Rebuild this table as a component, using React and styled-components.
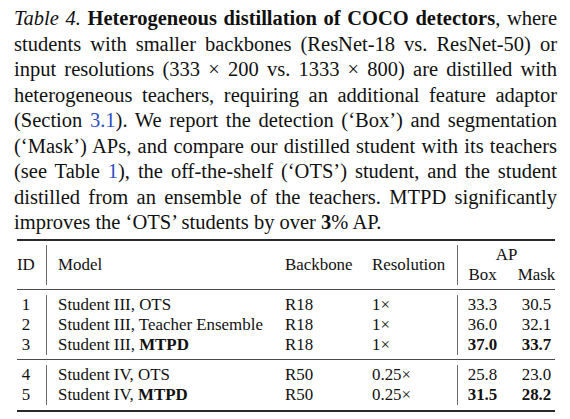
import styled, { createGlobalStyle } from "styled-components";

const GlobalStyle = createGlobalStyle`
  body {
    margin: 0;
    background: #fff;
  }
`;

const COLS = "29px 228px 87px 96px 50px 48px";

const rows = [
  [
    { id: 1, model: "Student III, ", tag: "OTS", backbone: "R18", res: "1×", box: "33.3", mask: "30.5" },
    { id: 2, model: "Student III, ", tag: "Teacher Ensemble", backbone: "R18", res: "1×", box: "36.0", mask: "32.1" },
    { id: 3, model: "Student III, ", tag: "MTPD", ours: true, backbone: "R18", res: "1×", box: "37.0", mask: "33.7" },
  ],
  [
    { id: 4, model: "Student IV, ", tag: "OTS", backbone: "R50", res: "0.25×", box: "25.8", mask: "23.0" },
    { id: 5, model: "Student IV, ", tag: "MTPD", ours: true, backbone: "R50", res: "0.25×", box: "31.5", mask: "28.2" },
  ],
];

function App() {
  return (
    <Page>
      <GlobalStyle />
      <Caption>
        <Line>
          <i>Table 4.</i> <b>Heterogeneous distillation of COCO detectors</b>, where
        </Line>
        <Line>students with smaller backbones (ResNet-18 vs. ResNet-50) or</Line>
        <Line>input resolutions (333 × 200 vs. 1333 × 800) are distilled with</Line>
        <Line>heterogeneous teachers, requiring an additional feature adaptor</Line>
        <Line>
          (Section <Ref>3.1</Ref>). We report the detection (‘Box’) and segmentation
        </Line>
        <Line>(‘Mask’) APs, and compare our distilled student with its teachers</Line>
        <Line>
          (see Table <Ref>1</Ref>), the off-the-shelf (‘OTS’) student, and the student
        </Line>
        <Line>distilled from an ensemble of the teachers. MTPD significantly</Line>
        <Line $last>
          improves the ‘OTS’ students by over <b>3</b>% AP.
        </Line>
      </Caption>

      <Table>
        <Rule $thick />
        <Section $top={4} $bottom={4}>
          <Cell $first $span={2}>ID</Cell>
          <Cell $vline $span={2}>Model</Cell>
          <Cell $span={2}>Backbone</Cell>
          <Cell $span={2}>Resolution</Cell>
          <Cell $vline $center $cols={2}>AP</Cell>
          <Cell $vline $center>Box</Cell>
          <Cell $center $last>Mask</Cell>
        </Section>
        {rows.map((group, gi) => (
          <div key={gi}>
            <Rule />
            <Section $top={5} $bottom={gi === rows.length - 1 ? 5 : 4}>
              {group.map((r) => (
                <Row key={r.id}>
                  <Cell $first $center>{r.id}</Cell>
                  <Cell $vline>
                    <span>
                      {r.model}
                      {r.ours ? <b>{r.tag}</b> : r.tag}
                    </span>
                  </Cell>
                  <Cell>{r.backbone}</Cell>
                  <Cell>{r.res}</Cell>
                  <Cell $vline $center $bold={r.ours}>{r.box}</Cell>
                  <Cell $center $last $bold={r.ours}>{r.mask}</Cell>
                </Row>
              ))}
            </Section>
          </div>
        ))}
        <Rule $thick />
      </Table>
    </Page>
  );
}

export default App;

const Page = styled.div`
  width: 543px;
  padding: 6px 0 0 14px;
  font-family: "Liberation Serif", "Times New Roman", serif;
  color: #111;
`;

const Caption = styled.div`
  font-size: 20.5px;
  line-height: 25.5px;
`;

const Line = styled.div`
  white-space: nowrap;
  text-align: ${(p) => (p.$last ? "left" : "justify")};
  text-align-last: ${(p) => (p.$last ? "left" : "justify")};
`;

const Ref = styled.span`
  color: #2f4fc4;
`;

const Table = styled.div`
  width: 538px;
  margin: 3px 0 0 3px;
  font-size: 16.9px;
  line-height: 20px;
`;

const Rule = styled.div`
  height: ${(p) => (p.$thick ? "2px" : "1px")};
  background: ${(p) => (p.$thick ? "#2a2a2a" : "#4a4a4a")};
`;

const Section = styled.div`
  display: grid;
  grid-template-columns: ${COLS};
  margin: ${(p) => p.$top}px 0 ${(p) => p.$bottom}px;
`;

const Row = styled.div`
  display: contents;
`;

const Cell = styled.div`
  box-sizing: border-box;
  display: flex;
  align-items: center;
  justify-content: ${(p) => (p.$center ? "center" : "flex-start")};
  padding: 0 ${(p) => (p.$last ? 0 : 11)}px 0 ${(p) => (p.$first ? 0 : 11)}px;
  border-left: ${(p) => (p.$vline ? "1px solid #6a6a6a" : "none")};
  font-weight: ${(p) => (p.$bold ? "bold" : "normal")};
  white-space: pre;
  grid-row: ${(p) => (p.$span ? `span ${p.$span}` : "auto")};
  grid-column: ${(p) => (p.$cols ? `span ${p.$cols}` : "auto")};
  min-height: 20px;
`;
